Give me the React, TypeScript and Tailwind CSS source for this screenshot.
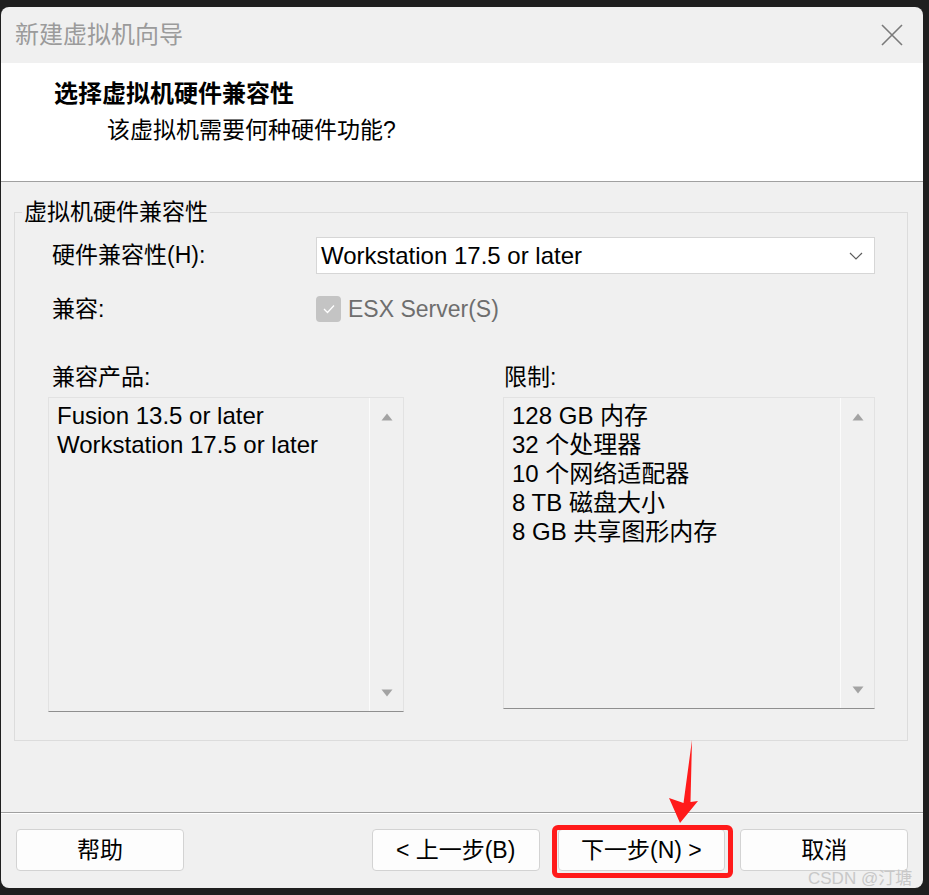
import React from "react";

const latin = "font-['Liberation_Sans','Noto_Sans_CJK_SC',sans-serif]";

function ScrollList({ items, width, height }: { items: string[]; width: string; height: string }) {
    return (
        <div className={`${width} ${height} flex border border-[#e2e2e2] border-b-[#8f8f8f] bg-[#f0f0f0]`}>
            <div className="flex-1 pl-[8px] pt-[3px]">
                {items.map((item) => (
                    <div key={item} className="text-[24px] leading-[29px] text-black whitespace-nowrap">
                        {item}
                    </div>
                ))}
            </div>
            <div className="w-[34px] border-l border-[#fbfbfb] flex flex-col items-center justify-between pt-[15px] pb-[14px]">
                <svg width="12" height="8" viewBox="0 0 12 8">
                    <path d="M6 0.5 L11.5 7.5 L0.5 7.5 Z" fill="#a3a3a3" />
                </svg>
                <svg width="12" height="8" viewBox="0 0 12 8">
                    <path d="M0.5 0.5 L11.5 0.5 L6 7.5 Z" fill="#a3a3a3" />
                </svg>
            </div>
        </div>
    );
}

function Button({ label, className }: { label: string; className?: string }) {
    return (
        <button
            className={`w-[168px] h-[42px] bg-[#fdfdfd] border border-[#d3d3d3] rounded-[4px] text-[23px] leading-none text-black ${className ?? ""}`}
        >
            {label}
        </button>
    );
}

export default function App() {
    return (
        <div className={`relative w-[929px] h-[895px] bg-[#1f1f1f] pt-[7px] pl-[1px] overflow-hidden ${latin}`}>
            {/* dialog window */}
            <div className="w-[922px] h-[881px] bg-[#f0f0f0] rounded-[8px] overflow-hidden flex flex-col">
                {/* title bar */}
                <div className="h-[56px] shrink-0 flex items-center justify-between pl-[14px] pr-[20px]">
                    <span className="text-[24px] text-[#9b9b9b] leading-none">新建虚拟机向导</span>
                    <svg width="22" height="22" viewBox="0 0 22 22">
                        <path d="M1 1 L21 21 M21 1 L1 21" stroke="#7a7a7a" strokeWidth="1.6" />
                    </svg>
                </div>

                {/* header */}
                <div className="h-[119px] shrink-0 bg-white border-b border-[#a0a0a0] pt-[16px] pl-[53px]">
                    <div className="text-[24px] leading-[30px] font-bold text-black">选择虚拟机硬件兼容性</div>
                    <div className="mt-[6px] pl-[53px] text-[23px] leading-[30px] text-black">该虚拟机需要何种硬件功能?</div>
                </div>

                {/* body */}
                <div className="h-[630px] shrink-0 pt-[15px] pl-[13px] pr-[15px]">
                    <fieldset className="border border-[#dcdcdc] pb-[28px]">
                        <legend className="ml-[7px] px-[2px] text-[23px] leading-[30px] text-black">虚拟机硬件兼容性</legend>

                        <div className="mt-[10px] flex items-center pl-[37px]">
                            <span className="w-[264px] text-[23px] text-black">硬件兼容性(H):</span>
                            <div className="w-[559px] h-[37px] bg-white border border-[#d6d6d6] flex items-center justify-between pl-[4px] pr-[11px]">
                                <span className="text-[24px] text-black">Workstation 17.5 or later</span>
                                <svg width="14" height="8" viewBox="0 0 14 8">
                                    <path d="M1 1 L7 7 L13 1" fill="none" stroke="#5c5c5c" strokeWidth="1.2" />
                                </svg>
                            </div>
                        </div>

                        <div className="mt-[22px] h-[26px] flex items-center pl-[37px]">
                            <span className="w-[264px] text-[23px] text-black">兼容:</span>
                            <span className="w-[25px] h-[26px] rounded-[4px] bg-[#c4c4c4] flex items-center justify-center">
                                <svg width="12" height="10" viewBox="0 0 12 10">
                                    <path d="M1 5 L4.5 8.5 L11 1.5" fill="none" stroke="#ffffff" strokeWidth="1.3" />
                                </svg>
                            </span>
                            <span className="ml-[7px] text-[23px] text-[#6e6e6e]">ESX Server(S)</span>
                        </div>

                        <div className="mt-[40px] flex pl-[33px] text-[23px] leading-[30px] text-black">
                            <span className="w-[455px] pl-[4px]">兼容产品:</span>
                            <span className="pl-[1px]">限制:</span>
                        </div>

                        <div className="mt-[5px] flex pl-[33px]">
                            <ScrollList
                                width="w-[356px]"
                                height="h-[315px]"
                                items={["Fusion 13.5 or later", "Workstation 17.5 or later"]}
                            />
                            <div className="w-[99px]" />
                            <ScrollList
                                width="w-[372px]"
                                height="h-[312px]"
                                items={["128 GB 内存", "32 个处理器", "10 个网络适配器", "8 TB 磁盘大小", "8 GB 共享图形内存"]}
                            />
                        </div>
                    </fieldset>
                </div>

                {/* footer */}
                <div className="flex-1 border-t border-[#a0a0a0] shadow-[inset_0_1px_0_#ffffff] flex items-start pt-[16px] pl-[15px] pr-[15px]">
                    <Button label="帮助" />
                    <Button label="< 上一步(B)" className="ml-[188px] w-[167px]" />
                    <Button label="下一步(N) >" className="ml-[18px] w-[167px]" />
                    <Button label="取消" className="ml-[15px]" />
                </div>
            </div>

            {/* annotation: red highlight box */}
            <div className="absolute left-[552px] top-[825px] w-[181px] h-[53px] border-[5px] border-[#ff1a1a] rounded-[6px] pointer-events-none" />

            {/* annotation: red arrow */}
            <svg className="absolute left-0 top-0 pointer-events-none" width="929" height="895" viewBox="0 0 929 895">
                <polygon points="692,740 690.5,802 698,801 680,823 669,798 683.5,803" fill="#ff1a1a" />
            </svg>

            {/* watermark */}
            <div className="absolute left-[808px] top-[868px] text-[17px] leading-[22px] text-[#c4c4c4] opacity-90 whitespace-nowrap">
                CSDN @汀塘
            </div>
        </div>
    );
}
